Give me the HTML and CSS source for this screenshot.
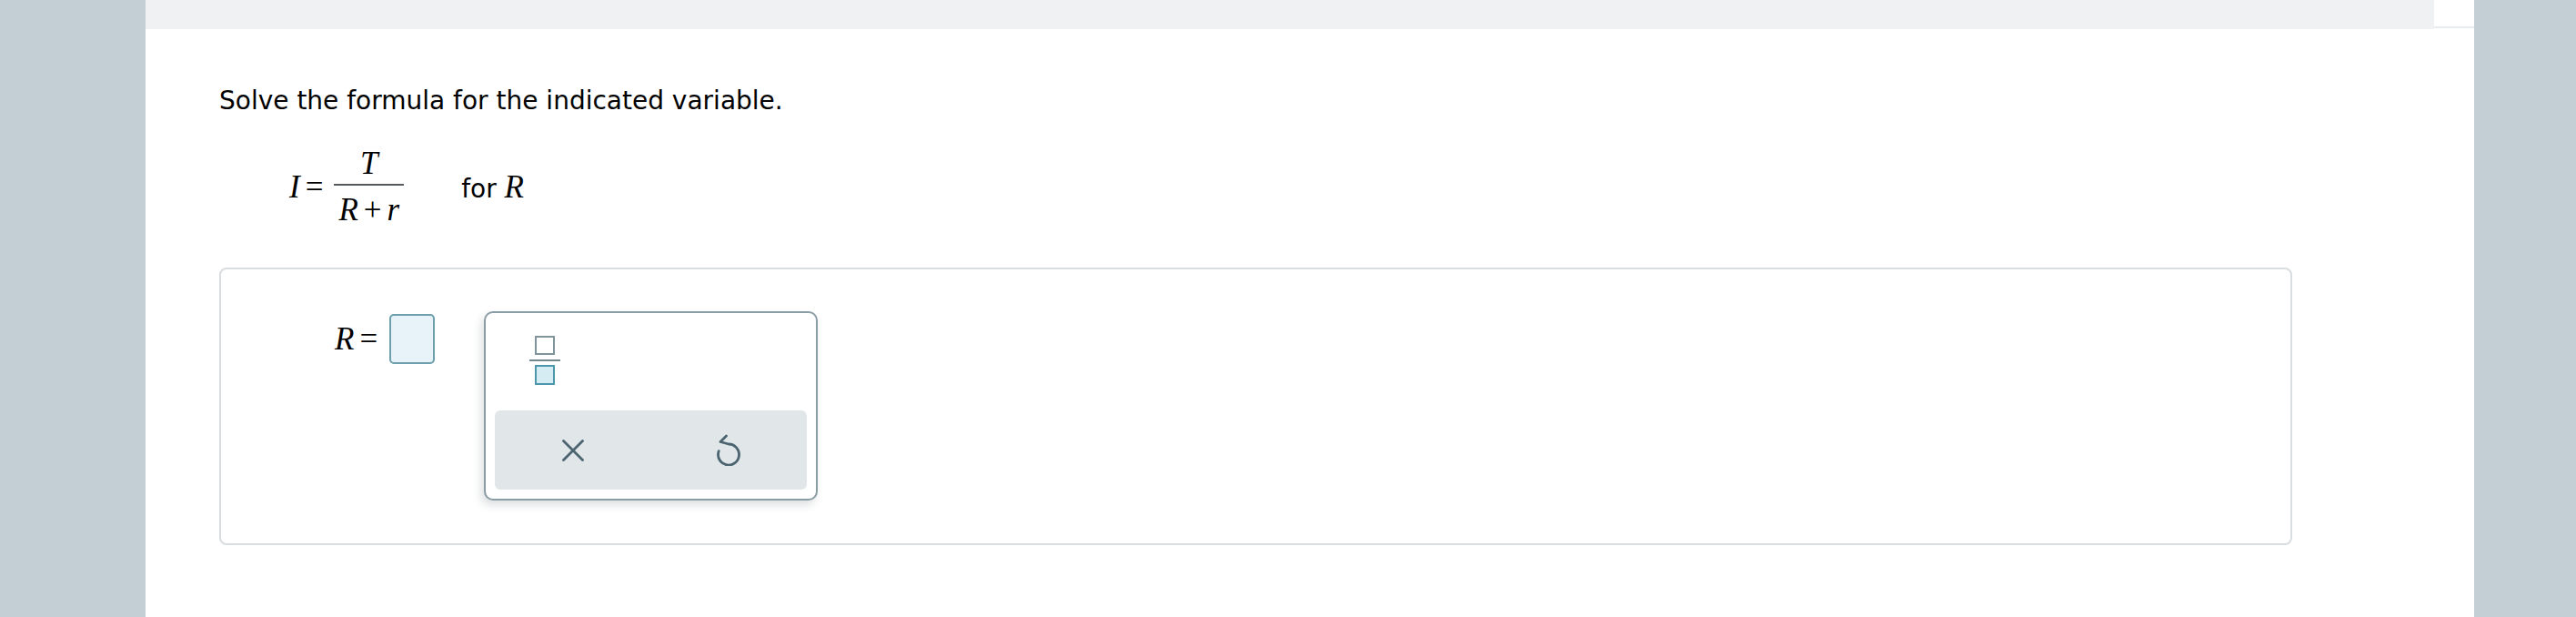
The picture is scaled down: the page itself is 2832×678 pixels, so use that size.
FILE: index.html
```html
<!DOCTYPE html>
<html lang="en">
<head>
<meta charset="utf-8">
<title>Solve the formula</title>
<link rel="stylesheet" href="styles.css">
</head>
<body>
<div class="page">
  <div class="topbar">
    <div class="topbar-main"></div>
    <div class="topbar-end"></div>
  </div>
  <main class="content">
    <p class="prompt">Solve the formula for the indicated variable.</p>
    <div class="formula">
      <span class="math lhs">I<span class="op">=</span></span>
      <span class="frac">
        <span class="math num">T</span>
        <span class="bar"></span>
        <span class="math den">R<span class="bin">+</span>r</span>
      </span>
      <span class="for">for <span class="math">R</span></span>
    </div>
    <section class="card">
      <div class="answer">
        <span class="math">R<span class="op">=</span></span>
        <span class="input-box"></span>
      </div>
      <div class="palette">
        <div class="keys">
          <button class="key key-frac" type="button" aria-label="fraction">
            <svg width="34" height="54" viewBox="0 0 34 54">
              <rect x="7" y="1" width="20" height="19" fill="none" stroke="#80949c" stroke-width="2"/>
              <rect x="0" y="26" width="34" height="2" fill="#70858e"/>
              <rect x="7" y="33" width="20" height="20" fill="#d6ecf3" stroke="#4d97ad" stroke-width="2"/>
            </svg>
          </button>
        </div>
        <div class="actions">
          <button class="action" type="button" aria-label="clear">
            <svg width="24" height="24" viewBox="0 0 24 24">
              <path d="M1.5 1.5 L22.5 22.5 M22.5 1.5 L1.5 22.5" stroke="#4b6470" stroke-width="2.8" fill="none" stroke-linecap="round"/>
            </svg>
          </button>
          <button class="action" type="button" aria-label="undo">
            <svg width="28" height="35" viewBox="0 0 28 35">
              <path d="M11.5 2 L5 8.5 L14 11 A11.5 11.5 0 1 1 3.2 18.6" stroke="#4b6470" stroke-width="2.8" fill="none" stroke-linecap="round" stroke-linejoin="round"/>
            </svg>
          </button>
        </div>
      </div>
    </section>
  </main>
</div>
</body>
</html>
```

FILE: styles.css
```css
html, body {
  margin: 0;
  padding: 0;
}
body {
  background: #c4cfd5;
  font-family: "DejaVu Sans", Verdana, sans-serif;
  color: #000;
}
.page {
  margin-left: 160px;
  width: 2560px;
  min-height: 100vh;
  background: #ffffff;
}
.topbar {
  display: flex;
  height: 32px;
}
.topbar-main {
  flex: 1;
  background: #eff1f3;
}
.topbar-end {
  width: 44px;
  height: 29px;
  border-bottom: 2px solid #e9ecee;
}
.content {
  padding: 62px 0 0 81px;
}
.prompt {
  margin: 0;
  font-size: 28px;
  line-height: 34px;
}
.math {
  font-family: "Liberation Serif", "Times New Roman", serif;
  font-style: italic;
  font-size: 35px;
  line-height: 35px;
}
.op {
  font-style: normal;
  margin-left: 6px;
}
.bin {
  font-style: normal;
  margin: 0 6px;
}
.formula {
  display: flex;
  align-items: center;
  margin-top: 34px;
  padding-left: 77px;
}
.frac {
  display: flex;
  flex-direction: column;
  align-items: center;
  margin-left: 12px;
}
.num {
  display: block;
  margin-bottom: 5px;
}
.bar {
  display: block;
  align-self: stretch;
  height: 2px;
  background: #555b5e;
}
.den {
  display: block;
  margin-top: 9px;
  padding: 0 5px;
}
.for {
  margin-left: 63px;
  padding-top: 3px;
  font-size: 28px;
  line-height: 34px;
}
.for .math {
  line-height: 34px;
}
.card {
  box-sizing: border-box;
  width: 2279px;
  height: 305px;
  margin-top: 46px;
  border: 2px solid #d8dde0;
  border-radius: 8px;
  padding: 46px 0 0 125px;
  display: flex;
  align-items: flex-start;
}
.answer {
  display: flex;
  align-items: center;
  margin-top: 3px;
}
.input-box {
  box-sizing: border-box;
  width: 50px;
  height: 55px;
  margin-left: 13px;
  border: 2px solid #6d9fad;
  border-radius: 5px;
  background: #e7f3f8;
}
.palette {
  box-sizing: border-box;
  width: 367px;
  height: 208px;
  margin-left: 54px;
  padding: 10px;
  border: 2px solid #8a9ca4;
  border-radius: 10px;
  background: #fff;
  box-shadow: -3px 5px 10px rgba(60, 80, 90, 0.18);
  display: flex;
  flex-direction: column;
}
.keys {
  box-sizing: border-box;
  height: 97px;
  padding-top: 15px;
  display: flex;
  align-items: flex-start;
}
.key {
  border: 0;
  background: transparent;
  padding: 0;
  margin: 0;
  cursor: pointer;
}
.key-frac {
  width: 110px;
  height: 54px;
  display: flex;
  justify-content: center;
}
.key svg,
.action svg {
  display: block;
}
.actions {
  height: 87px;
  background: #e1e6e9;
  border-radius: 6px;
  display: grid;
  grid-template-columns: 1fr 1fr;
}
.action {
  border: 0;
  background: transparent;
  padding: 0;
  margin: 0;
  display: flex;
  align-items: center;
  justify-content: center;
  cursor: pointer;
}
```
